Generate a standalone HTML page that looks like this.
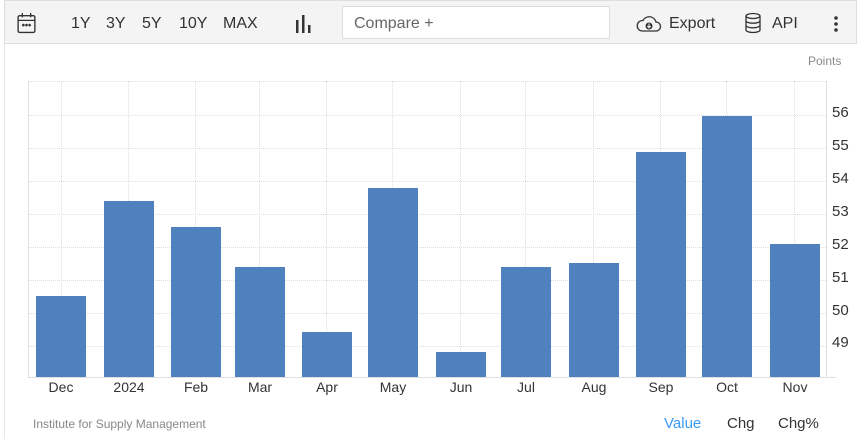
<!DOCTYPE html>
<html><head><style>
body{margin:0;width:859px;height:439px;background:#fff;font-family:"Liberation Sans",sans-serif;position:relative;overflow:hidden}
.a{position:absolute}
.tb{left:4px;top:0;width:853px;height:44px;background:#f4f4f4;border:1px solid #dedede;box-sizing:border-box}
.t{font-size:16px;color:#333;top:15px}
.hl{left:28px;width:798px;border-top:1px dotted #ddd;height:0}
.vl{top:81px;height:296px;border-left:1px dotted #ddd;width:0}
.bar{background:#4e81bd;width:50px;bottom:62px}
.yl{left:832px;font-size:15px;color:#333}
.xl{top:379px;font-size:14px;color:#333;width:60px;text-align:center}
</style></head><body>
<div class="a" style="left:4px;top:44px;width:1px;height:395px;background:#e6e6e6"></div>
<div class="a tb"></div>
<svg class="a" style="left:16px;top:12px" width="21" height="22" viewBox="0 0 20 21" fill="none" stroke="#333" stroke-width="1.3"><rect x="2" y="3.5" width="16" height="16" rx="1.5"/><line x1="2" y1="8" x2="18" y2="8"/><line x1="6" y1="1" x2="6" y2="5"/><line x1="14" y1="1" x2="14" y2="5"/><circle cx="7" cy="12.5" r=".6" fill="#333"/><circle cx="10" cy="12.5" r=".6" fill="#333"/><circle cx="13" cy="12.5" r=".6" fill="#333"/></svg>
<div class="a t" style="left:71px">1Y</div>
<div class="a t" style="left:106px">3Y</div>
<div class="a t" style="left:142px">5Y</div>
<div class="a t" style="left:179px">10Y</div>
<div class="a t" style="left:223px">MAX</div>
<svg class="a" style="left:296px;top:15px" width="16" height="18"><rect x="0" y="5" width="2.5" height="13" fill="#333"/><rect x="6" y="0" width="2.5" height="18" fill="#333"/><rect x="12" y="10" width="2.5" height="8" fill="#333"/></svg>
<div class="a" style="left:342px;top:6px;width:268px;height:33px;background:#fff;border:1px solid #ddd;box-sizing:border-box"></div>
<div class="a t" style="left:354px;color:#666">Compare +</div>
<svg class="a" style="left:636px;top:14px" width="26" height="20" viewBox="0 0 26 20" fill="none" stroke="#333" stroke-width="1.3"><path d="M6 17H20a4.5 4.5 0 0 0 0-9 7 7 0 0 0-13-1.5A5 5 0 0 0 6 17z"/><circle cx="13" cy="12" r="3.5" fill="#333" stroke="none"/><path d="M13 9.5v4M11.3 12l1.7 1.8 1.7-1.8" stroke="#fff" stroke-width="1"/></svg>
<div class="a t" style="left:669px">Export</div>
<svg class="a" style="left:744px;top:12px" width="18" height="22" viewBox="0 0 18 22" fill="none" stroke="#333" stroke-width="1.3"><ellipse cx="9" cy="4" rx="7" ry="2.5"/><path d="M2 4v14c0 1.4 3.1 2.5 7 2.5s7-1.1 7-2.5V4M2 8.7c0 1.4 3.1 2.5 7 2.5s7-1.1 7-2.5M2 13.3c0 1.4 3.1 2.5 7 2.5s7-1.1 7-2.5"/></svg>
<div class="a t" style="left:772px">API</div>
<svg class="a" style="left:833px;top:15px" width="6" height="18"><circle cx="3" cy="3" r="1.8" fill="#333"/><circle cx="3" cy="9" r="1.8" fill="#333"/><circle cx="3" cy="15" r="1.8" fill="#333"/></svg>
<div class="a" style="left:808px;top:54px;font-size:12px;color:#888">Points</div>
<div class="a hl" style="top:81px"></div>
<div class="a hl" style="top:115px"></div><div class="a hl" style="top:148px"></div><div class="a hl" style="top:181px"></div><div class="a hl" style="top:214px"></div><div class="a hl" style="top:247px"></div><div class="a hl" style="top:280px"></div><div class="a hl" style="top:313px"></div><div class="a hl" style="top:346px"></div>
<div class="a" style="left:28px;top:81px;width:1px;height:296px;background:#e0e0e0"></div>
<div class="a vl" style="left:61px"></div><div class="a vl" style="left:128px"></div><div class="a vl" style="left:195px"></div><div class="a vl" style="left:259px"></div><div class="a vl" style="left:326px"></div><div class="a vl" style="left:392px"></div><div class="a vl" style="left:460px"></div><div class="a vl" style="left:525px"></div><div class="a vl" style="left:593px"></div><div class="a vl" style="left:660px"></div><div class="a vl" style="left:726px"></div><div class="a vl" style="left:794px"></div>
<div class="a" style="left:826px;top:81px;width:1px;height:297px;background:#e0e0e0"></div>
<div class="a" style="left:28px;top:377px;width:808px;height:1px;background:#e0e0e0"></div>
<div class="a bar" style="left:36px;height:81px"></div>
<div class="a bar" style="left:104px;height:176px"></div>
<div class="a bar" style="left:171px;height:150px"></div>
<div class="a bar" style="left:235px;height:110px"></div>
<div class="a bar" style="left:302px;height:45px"></div>
<div class="a bar" style="left:368px;height:189px"></div>
<div class="a bar" style="left:436px;height:25px"></div>
<div class="a bar" style="left:501px;height:110px"></div>
<div class="a bar" style="left:569px;height:114px"></div>
<div class="a bar" style="left:636px;height:225px"></div>
<div class="a bar" style="left:702px;height:261px"></div>
<div class="a bar" style="left:770px;height:133px"></div>
<div class="a yl" style="top:104px">56</div><div class="a yl" style="top:137px">55</div><div class="a yl" style="top:170px">54</div><div class="a yl" style="top:203px">53</div><div class="a yl" style="top:236px">52</div><div class="a yl" style="top:269px">51</div><div class="a yl" style="top:302px">50</div><div class="a yl" style="top:334px">49</div>
<div class="a xl" style="left:31px">Dec</div><div class="a xl" style="left:99px">2024</div><div class="a xl" style="left:166px">Feb</div><div class="a xl" style="left:230px">Mar</div><div class="a xl" style="left:297px">Apr</div><div class="a xl" style="left:363px">May</div><div class="a xl" style="left:431px">Jun</div><div class="a xl" style="left:496px">Jul</div><div class="a xl" style="left:564px">Aug</div><div class="a xl" style="left:631px">Sep</div><div class="a xl" style="left:697px">Oct</div><div class="a xl" style="left:765px">Nov</div>
<div class="a" style="left:33px;top:417px;font-size:12px;color:#888">Institute for Supply Management</div>
<div class="a" style="left:664px;top:415px;font-size:15px;color:#3c9af2">Value</div>
<div class="a" style="left:727px;top:415px;font-size:15px;color:#333">Chg</div>
<div class="a" style="left:778px;top:415px;font-size:15px;color:#333">Chg%</div>
</body></html>
